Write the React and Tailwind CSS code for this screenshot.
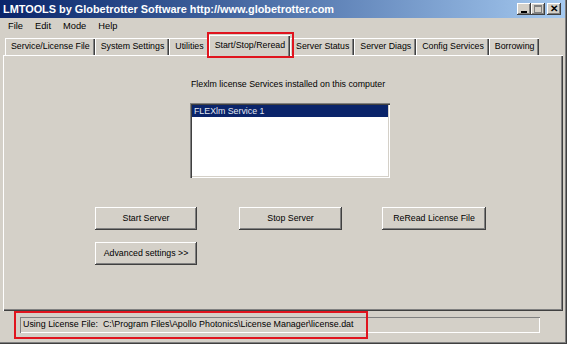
import React from "react";

const FONT = "font-['Liberation_Sans',Arial,sans-serif]";

const TABS = [
  "Service/License File",
  "System Settings",
  "Utilities",
  "Start/Stop/Reread",
  "Server Status",
  "Server Diags",
  "Config Services",
  "Borrowing",
];

const ACTIVE = "Start/Stop/Reread";

function WinButton({ children, className = "" }) {
  return (
    <button
      className={`h-[23px] w-[102px] bg-[#d4d0c8] text-[8.8px] text-black shadow-[inset_-1px_-1px_#404040,inset_1px_1px_#ffffff,inset_-2px_-2px_#808080] ${className}`}
    >
      {children}
    </button>
  );
}

function CaptionButton({ children }) {
  return (
    <div className="flex h-[12px] w-[14px] items-center justify-center bg-[#d4d0c8] shadow-[inset_-1px_-1px_#404040,inset_1px_1px_#ffffff,inset_-2px_-2px_#808080]">
      {children}
    </div>
  );
}

export default function App() {
  return (
    <div className={`relative h-[344px] w-[567px] overflow-hidden bg-[#d4d0c8] ${FONT} shadow-[inset_-1px_-1px_#404040,inset_-2px_-2px_#808080]`}>
      {/* Title bar */}
      <div className="mr-[2px] flex h-[18px] items-center justify-between bg-gradient-to-r from-[#0a246a] to-[#a6caf0] pl-[3px] pr-[4px]">
        <span className="text-[10.9px] font-bold text-white">
          LMTOOLS by Globetrotter Software http://www.globetrotter.com
        </span>
        <div className="flex items-center">
          <CaptionButton>
            <span className="mt-[5px] h-[2px] w-[6px] bg-black" />
          </CaptionButton>
          <CaptionButton>
            <span className="h-[8px] w-[8px] border border-t-2 border-[#808080]" />
          </CaptionButton>
          <div className="ml-[2px]">
            <CaptionButton>
              <span className="text-[10px] font-bold leading-none text-black">✕</span>
            </CaptionButton>
          </div>
        </div>
      </div>

      {/* Menu bar */}
      <div className="flex h-[17px] items-center gap-[12px] pl-[8px] text-[9.3px] text-black">
        <span>File</span>
        <span>Edit</span>
        <span>Mode</span>
        <span>Help</span>
      </div>

      {/* Tabs */}
      <div className="flex h-[20px] items-end pl-[5px] pt-[1px]">
        {TABS.map((t) =>
          t === ACTIVE ? (
            <div
              key={t}
              className="relative z-10 -mb-[1px] flex h-[21px] items-center border-l border-t border-white bg-[#d4d0c8] px-[5px] text-[8.8px] text-black shadow-[inset_-1px_0_#404040,inset_-2px_0_#808080]"
            >
              {t}
            </div>
          ) : (
            <div
              key={t}
              className="flex h-[17px] items-center border-l border-t border-white px-[5px] text-[8.8px] text-black shadow-[inset_-1px_0_#404040,inset_-2px_0_#808080]"
            >
              {t}
            </div>
          )
        )}
      </div>

      {/* Panel */}
      <div className="ml-[3px] mr-[4px] h-[256px] border-l border-t border-white shadow-[inset_-1px_-1px_#404040,inset_-2px_-2px_#808080]">
        <div className="pl-[187px] pt-[22px] text-[8.8px] text-black">
          Flexlm license Services installed on this computer
        </div>
        <div className="ml-[186px] mt-[12px] h-[75px] w-[200px] bg-white p-[2px] shadow-[inset_1px_1px_#808080,inset_2px_2px_#404040,inset_-1px_-1px_#ffffff,inset_-2px_-2px_#d4d0c8]">
          <div className="flex h-[12px] items-center bg-[#0a246a] pl-[2px] text-[8.8px] text-[#e4e8f2]">
            FLEXlm Service 1
          </div>
        </div>
        <div className="ml-[91px] mt-[29px] flex gap-[42px]">
          <WinButton>Start Server</WinButton>
          <WinButton className="w-[103px]">Stop Server</WinButton>
          <WinButton className="ml-[-2px] w-[104px]">ReRead License File</WinButton>
        </div>
        <div className="ml-[91px] mt-[9px]">
          <WinButton>Advanced settings &gt;&gt;</WinButton>
        </div>
      </div>

      {/* Status bar */}
      <div className="ml-[20px] mt-[6px] flex h-[16px] w-[520px] items-center pl-[3px] text-[8.9px] text-black shadow-[inset_1px_1px_#808080,inset_-1px_-1px_#ffffff]">
        Using License File:&nbsp;&nbsp;C:\Program Files\Apollo Photonics\License Manager\license.dat
      </div>

      {/* Annotation highlights */}
      <div className="pointer-events-none absolute left-[207px] top-[32px] h-[26px] w-[87px] border-2 border-[#e0141e]" />
      <div className="pointer-events-none absolute left-[14px] top-[311px] h-[28px] w-[354px] border-2 border-[#e0141e]" />
    </div>
  );
}
